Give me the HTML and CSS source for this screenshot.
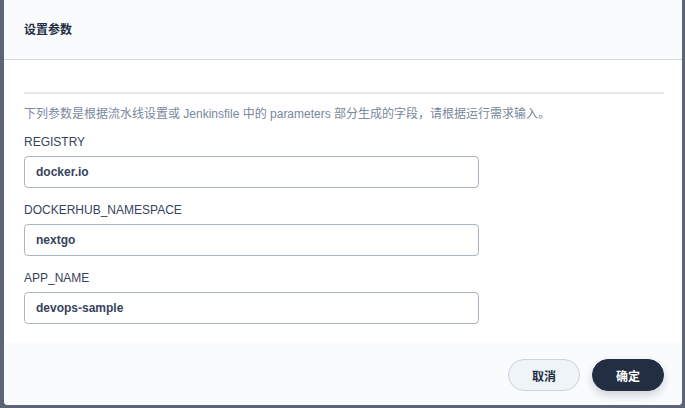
FILE: index.html
```html
<!DOCTYPE html>
<html lang="zh">
<head>
<meta charset="utf-8">
<title>设置参数</title>
<link rel="stylesheet" href="styles.css">
</head>
<body>
<div class="dialog">
  <div class="header"><span class="title">设置参数</span></div>
  <div class="body">
    <div class="divider"></div>
    <p class="desc">下列参数是根据流水线设置或 Jenkinsfile 中的 parameters 部分生成的字段，请根据运行需求输入。</p>
    <div class="field">
      <label class="label">REGISTRY</label>
      <input class="input" value="docker.io">
    </div>
    <div class="field">
      <label class="label">DOCKERHUB_NAMESPACE</label>
      <input class="input" value="nextgo">
    </div>
    <div class="field">
      <label class="label">APP_NAME</label>
      <input class="input" value="devops-sample">
    </div>
  </div>
  <div class="footer">
    <button class="btn btn-cancel">取消</button>
    <button class="btn btn-ok">确定</button>
  </div>
</div>
</body>
</html>
```
FILE: styles.css
```css
html, body {
  margin: 0;
  padding: 0;
  height: 100%;
}
body {
  background: #5d6477;
  font-family: "Liberation Sans", Arial, "Noto Sans CJK SC", sans-serif;
  overflow: hidden;
}
.dialog {
  margin-left: 4px;
  width: 678px;
  height: 405px;
  background: #fff;
  border-radius: 0 0 4px 4px;
  display: flex;
  flex-direction: column;
  overflow: hidden;
}
.header {
  height: 60px;
  box-sizing: border-box;
  background: #f9fbfd;
  border-bottom: 1px solid #d1d8e0;
  display: flex;
  align-items: center;
  padding-left: 20px;
}
.title {
  font-size: 12px;
  font-weight: bold;
  color: #242e42;
  line-height: 16px;
}
.body {
  flex: 1;
  padding: 32px 18px 0 20px;
}
.divider {
  height: 2px;
  background: #e6e6e6;
}
.desc {
  margin: 10px 0 0;
  font-size: 12px;
  line-height: 20px;
  color: #79879c;
}
.field {
  margin-top: 8px;
  display: flex;
  flex-direction: column;
}
.field + .field {
  margin-top: 12px;
}
.label {
  font-size: 12px;
  line-height: 20px;
  color: #36435c;
}
.input {
  margin-top: 4px;
  width: 455px;
  height: 32px;
  box-sizing: border-box;
  border: 1px solid #abb4c2;
  border-radius: 4px;
  padding: 0 11px;
  font-family: "Liberation Sans", Arial, sans-serif;
  font-size: 12px;
  font-weight: bold;
  color: #36435c;
  background: #fff;
  outline: none;
}
.footer {
  height: 63px;
  background: #f9fbfd;
  display: flex;
  justify-content: flex-end;
  align-items: flex-start;
  gap: 12px;
  padding: 17px 18px 0 0;
  box-sizing: border-box;
}
.btn {
  width: 72px;
  height: 32px;
  border-radius: 16px;
  font-family: "Liberation Sans", "Noto Sans CJK SC", sans-serif;
  font-size: 12px;
  font-weight: bold;
  cursor: pointer;
}
.btn-cancel {
  background: #eff4f9;
  border: 1px solid #ccd3db;
  color: #242e42;
}
.btn-ok {
  background: #242e42;
  border: 1px solid #242e42;
  color: #fff;
  box-shadow: 0 4px 8px 0 rgba(36, 46, 66, 0.2);
}
```
